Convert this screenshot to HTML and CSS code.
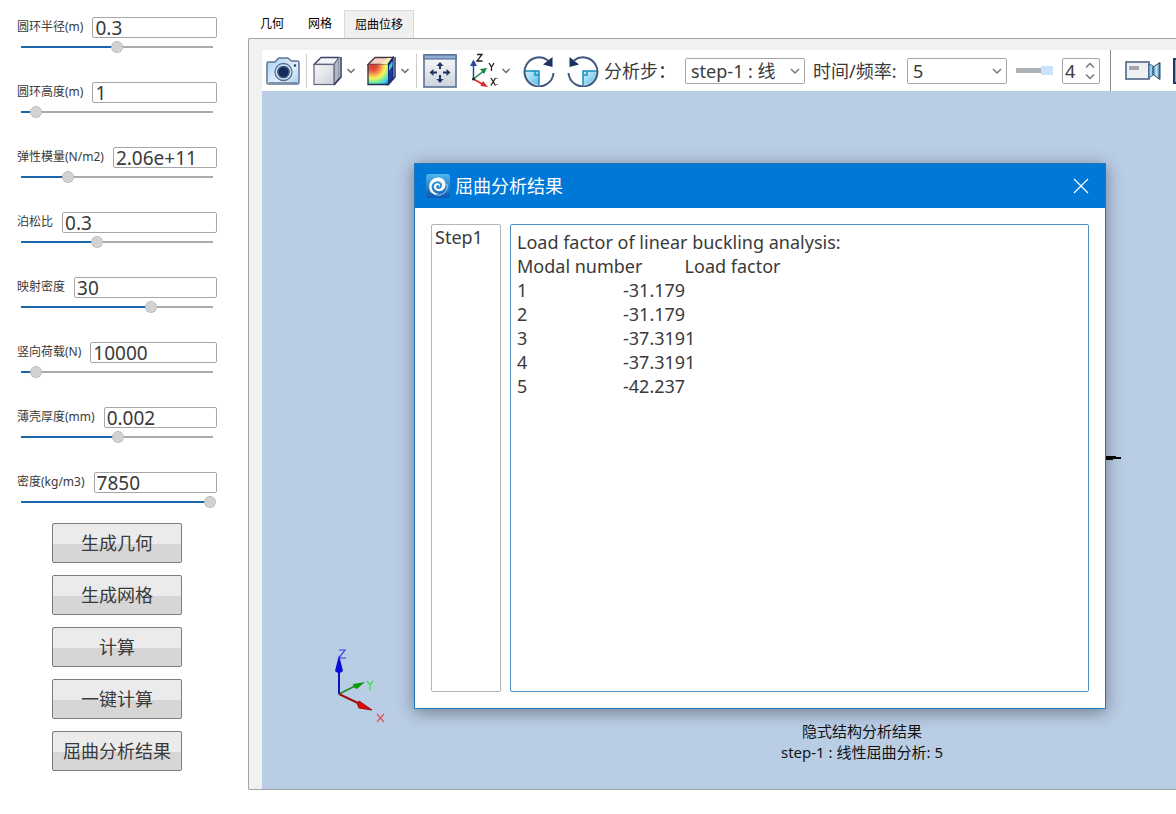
FILE: index.html
```html
<!DOCTYPE html>
<html lang="zh-CN">
<head>
<meta charset="utf-8">
<title>屈曲分析</title>
<link rel="stylesheet" href="styles.css">
</head>
<body>
<div class="app">
  <aside class="sidebar">
    <div class="fields">
      <div class="field">
        <div class="field-row"><label for="radius">圆环半径(m)</label><input class="field-value" id="radius" type="text" value="0.3"></div>
        <input class="slider" type="range" aria-label="圆环半径" min="0" max="1000" value="500" style="--fill:50%">
      </div>
      <div class="field">
        <div class="field-row"><label for="height">圆环高度(m)</label><input class="field-value" id="height" type="text" value="1"></div>
        <input class="slider" type="range" aria-label="圆环高度" min="0" max="1000" value="65" style="--fill:6.5%">
      </div>
      <div class="field">
        <div class="field-row"><label for="modulus">弹性模量(N/m2)</label><input class="field-value" id="modulus" type="text" value="2.06e+11"></div>
        <input class="slider" type="range" aria-label="弹性模量" min="0" max="1000" value="237" style="--fill:23.7%">
      </div>
      <div class="field">
        <div class="field-row"><label for="poisson">泊松比</label><input class="field-value" id="poisson" type="text" value="0.3"></div>
        <input class="slider" type="range" aria-label="泊松比" min="0" max="1000" value="392" style="--fill:39.2%">
      </div>
      <div class="field">
        <div class="field-row"><label for="mesh">映射密度</label><input class="field-value" id="mesh" type="text" value="30"></div>
        <input class="slider" type="range" aria-label="映射密度" min="0" max="1000" value="683" style="--fill:68.3%">
      </div>
      <div class="field">
        <div class="field-row"><label for="load">竖向荷载(N)</label><input class="field-value" id="load" type="text" value="10000"></div>
        <input class="slider" type="range" aria-label="竖向荷载" min="0" max="1000" value="65" style="--fill:6.5%">
      </div>
      <div class="field">
        <div class="field-row"><label for="thickness">薄壳厚度(mm)</label><input class="field-value" id="thickness" type="text" value="0.002"></div>
        <input class="slider" type="range" aria-label="薄壳厚度" min="0" max="1000" value="505" style="--fill:50.5%">
      </div>
      <div class="field">
        <div class="field-row"><label for="density">密度(kg/m3)</label><input class="field-value" id="density" type="text" value="7850"></div>
        <input class="slider" type="range" aria-label="密度" min="0" max="1000" value="1000" style="--fill:100%">
      </div>
    </div>
    <div class="actions">
      <button class="action" type="button">生成几何</button>
      <button class="action" type="button">生成网格</button>
      <button class="action" type="button">计算</button>
      <button class="action" type="button">一键计算</button>
      <button class="action" type="button">屈曲分析结果</button>
    </div>
  </aside>

  <main class="workspace">
    <nav class="tabs" role="tablist">
      <button class="tab" type="button" role="tab">几何</button>
      <button class="tab" type="button" role="tab">网格</button>
      <button class="tab tab-active" type="button" role="tab" aria-selected="true">屈曲位移</button>
    </nav>
    <section class="panel">
      <div class="toolbar">
        <button class="tool" type="button" aria-label="截图">
          <svg width="34" height="28" viewBox="0 0 34 28">
            <defs><linearGradient id="cam" x1="0" y1="0" x2="1" y2="1"><stop offset="0" stop-color="#a9cdf0"/><stop offset=".6" stop-color="#e4f0fb"/><stop offset="1" stop-color="#a8cbee"/></linearGradient></defs>
            <path d="M2.500 5H9L12 1.500Q12.500 1 13.500 1H21Q22 1 22.500 1.500L25.500 4H31.500Q33 4 33 5.500V25.500Q33 27 31.500 27H2.500Q1 27 1 25.500V6.500Q1 5 2.500 5Z" fill="url(#cam)" stroke="#5b7595" stroke-width="1.500"/>
            <path d="M3 25.500H31" stroke="#8193a9"/>
            <circle cx="17.500" cy="15" r="8.500" fill="#d7e7f7" stroke="#566f92" stroke-width="1.300"/>
            <circle cx="17.500" cy="15" r="5.600" fill="#152b5c" stroke="#35507d" stroke-width="1.500"/>
            <circle cx="29" cy="8.500" r="1.300" fill="#263f66"/>
          </svg>
        </button>
        <span class="divider"></span>
        <button class="tool" type="button" aria-label="显示模式">
          <svg width="30" height="30" viewBox="0 0 30 30">
            <defs><linearGradient id="cubeFace" x1="0" y1="0" x2="1" y2="1"><stop offset="0" stop-color="#f8f8fa"/><stop offset="1" stop-color="#cfd1d8"/></linearGradient></defs>
            <path d="M1 8.500L8 1.500H26L21 8.500Z" fill="#f4f5f8" stroke="#3a4562" stroke-width="1.300"/>
            <path d="M21 8.500L26 1.500V22L21 28.500Z" fill="#b4b8c4" stroke="#6a7288" stroke-width="1"/>
            <rect x="1" y="8.500" width="20" height="20" fill="url(#cubeFace)" stroke="#5e677e" stroke-width="1.200"/>
            <path d="M28 1V21L21 29" fill="none" stroke="#26365c" stroke-width="1.500"/>
          </svg>
          <svg class="chevron" width="10" height="8" viewBox="0 0 10 8"><path d="M1.500 2L5 5.500L8.500 2" fill="none" stroke="#607080" stroke-width="1.500"/></svg>
        </button>
        <button class="tool tool-contour" type="button" aria-label="云图">
          <svg width="30" height="30" viewBox="0 0 30 30">
            <defs><radialGradient id="contour" gradientUnits="userSpaceOnUse" cx="6" cy="10" r="24"><stop offset="0" stop-color="#cf3b35"/><stop offset=".2" stop-color="#e8563b"/><stop offset=".36" stop-color="#f5a94c"/><stop offset=".52" stop-color="#f8f45a"/><stop offset=".68" stop-color="#79ee9c"/><stop offset=".82" stop-color="#41cff0"/><stop offset="1" stop-color="#1852e0"/></radialGradient></defs>
            <path d="M1 8.500L8 1.500H26L21 8.500Z" fill="#f5d3c8" stroke="#4b3440" stroke-width="1.300"/>
            <path d="M14 8L20 2H26L21 8.500Z" fill="#f8edb0"/>
            <path d="M21 8.500L26 1.500V22L21 28.500Z" fill="#1736b4" stroke="#15245f" stroke-width="1.300"/>
            <path d="M22 10L25.500 5V10L22 15Z" fill="#43ccd8"/>
            <rect x="1" y="8.500" width="20" height="20" fill="url(#contour)"/>
            <path d="M1 8.500V28.500H21" fill="none" stroke="#252d4d" stroke-width="1.300"/>
            <path d="M28 1V21L21 29" fill="none" stroke="#26365c" stroke-width="1.500"/>
          </svg>
          <svg class="chevron" width="10" height="8" viewBox="0 0 10 8"><path d="M1.500 2L5 5.500L8.500 2" fill="none" stroke="#607080" stroke-width="1.500"/></svg>
        </button>
        <span class="divider"></span>
        <button class="tool" type="button" aria-label="适应窗口">
          <svg width="34" height="34" viewBox="0 0 34 34">
            <defs><linearGradient id="win" x1="0" y1="0" x2="0" y2="1"><stop offset="0" stop-color="#fafafb"/><stop offset="1" stop-color="#cdd3dd"/></linearGradient></defs>
            <rect x="1" y="1" width="32" height="32" fill="url(#win)" stroke="#5a7294" stroke-width="1.600"/>
            <rect x="1" y="1" width="32" height="4" fill="#8caed2" stroke="#4c678d"/>
            <path d="M17 10V15M17 21V26M9 18.500H14M20 18.500H25" stroke="#1f355f" stroke-width="2"/>
            <path d="M13.500 12L17 8L20.500 12ZM13.500 25L17 29L20.500 25ZM10.500 15L6.500 18.500L10.500 22ZM23.500 15L27.500 18.500L23.500 22Z" fill="#1f355f"/>
          </svg>
        </button>
        <button class="tool tool-axes" type="button" aria-label="视图方向">
          <svg width="28" height="36" viewBox="0 0 28 36">
            <path d="M3.500 26V11" stroke="#27479b" stroke-width="1.500"/><path d="M0 13L3.500 6.500L7 13Z" fill="#27479b"/>
            <path d="M3.500 26L13 18.500" stroke="#168442" stroke-width="1.500"/><path d="M10 16L17 15L14 21Z" fill="#168442"/>
            <path d="M3.500 26L13 31.500" stroke="#dd2929" stroke-width="1.500"/><path d="M13 28L18 34L10.500 33Z" fill="#dd2929"/>
            <circle cx="3.500" cy="26" r="1.500" fill="#222"/>
            <path d="M7 1.500H12L7 8H12.500M19 10L21.500 14L24 10M21.500 14V18M21 25L25.500 32.500M25.500 25L21 32.500" fill="none" stroke="#222" stroke-width="1.300"/>
            <path d="M27 25V26M27 31V32" stroke="#222"/>
          </svg>
          <svg class="chevron" width="10" height="8" viewBox="0 0 10 8"><path d="M1.500 2L5 5.500L8.500 2" fill="none" stroke="#607080" stroke-width="1.500"/></svg>
        </button>
        <button class="tool tool-rotate" type="button" aria-label="顺时针旋转">
          <svg width="32" height="32" viewBox="0 0 32 32">
            <defs><linearGradient id="quad" x1="0" y1="0" x2="1" y2="1"><stop offset="0" stop-color="#d3f1fd"/><stop offset="1" stop-color="#5dbbe4"/></linearGradient></defs>
            <path d="M2 16H16V30Q4 29 2 16Z" fill="url(#quad)"/>
            <path d="M1 16H16V30.500M12 16V20H16" fill="none" stroke="#168fc2" stroke-width="1.500"/>
            <path d="M25 5.500A14.500 14.500 0 1 0 30.500 18" fill="none" stroke="#40577f" stroke-width="2"/>
            <path d="M29.500 2V12L20 9.500Z" fill="#1c315d"/>
          </svg>
        </button>
        <button class="tool tool-rotate" type="button" aria-label="逆时针旋转">
          <svg width="32" height="32" viewBox="0 0 32 32">
            <path d="M30 16H16V30Q28 29 30 16Z" fill="url(#quad)"/>
            <path d="M31 16H16V30.500M20 16V20H16" fill="none" stroke="#168fc2" stroke-width="1.500"/>
            <path d="M7 5.500A14.500 14.500 0 1 1 1.500 18" fill="none" stroke="#40577f" stroke-width="2"/>
            <path d="M2.500 2V12L12 9.500Z" fill="#1c315d"/>
          </svg>
        </button>
        <label class="tool-label label-step" for="step">分析步：</label>
        <select class="combo combo-step" id="step"><option>step-1 : 线性屈曲分析</option></select>
        <label class="tool-label label-time" for="time">时间/频率:</label>
        <select class="combo combo-time" id="time"><option>5</option></select>
        <input class="frame-slider" type="range" aria-label="帧" min="0" max="4" value="4">
        <div class="spin">
          <input class="spin-value" type="text" inputmode="numeric" aria-label="帧序号" value="4">
          <div class="spin-buttons">
            <button class="spin-button" type="button" aria-label="增加"><svg width="10" height="7" viewBox="0 0 10 7"><path d="M1 5.500L5 1.500L9 5.500" fill="none" stroke="#6b7b88" stroke-width="1.500"/></svg></button>
            <button class="spin-button" type="button" aria-label="减少"><svg width="10" height="7" viewBox="0 0 10 7"><path d="M1 1.500L5 5.500L9 1.500" fill="none" stroke="#6b7b88" stroke-width="1.500"/></svg></button>
          </div>
        </div>
        <span class="divider divider-full"></span>
        <button class="tool" type="button" aria-label="录制动画">
          <svg width="36" height="20" viewBox="0 0 36 20">
            <defs><linearGradient id="lens" x1="0" y1="0" x2="1" y2="0"><stop offset="0" stop-color="#3b87b4"/><stop offset=".5" stop-color="#c7ebf9"/><stop offset="1" stop-color="#2d668f"/></linearGradient></defs>
            <rect x="1" y="1" width="23" height="17" fill="#eeeff3" stroke="#4f6788" stroke-width="1.600"/>
            <rect x="4" y="5" width="10" height="4" fill="#a5a6ac"/>
            <path d="M24 3L28 5V14L24 17Z" fill="#9ed1eb" stroke="#365d80"/>
            <path d="M28 6L35 1.500V18.500L28 13.500Z" fill="url(#lens)" stroke="#244c70"/>
          </svg>
        </button>
        <button class="tool tool-film" type="button" aria-label="动画">
          <svg width="34" height="26" viewBox="0 0 34 26"><rect x="1" y="1" width="32" height="24" fill="#8fa6c4" stroke="#23385e" stroke-width="2"/></svg>
        </button>
      </div>

      <div class="viewport">
        <svg class="triad" width="60" height="80" viewBox="0 0 60 80" aria-label="坐标轴">
          <path d="M9 49V20" stroke="#1111b8" stroke-width="2"/><path d="M5 26L9 10L13 26Q9 30 5 26Z" fill="#0c0cd8"/>
          <path d="M9 49L25 41" stroke="#168c16" stroke-width="1.500"/><path d="M23 39L35 37L27 44Q23 43 23 39Z" fill="#0c9b0c"/>
          <path d="M9 49L30 59" stroke="#9b1010" stroke-width="2"/><path d="M29 56L42 65L29 63Q26 59 29 56Z" fill="#dc0a0a" stroke="#a20b0b"/>
          <path d="M9 5H15L9 13H16" fill="none" stroke="#3838df" stroke-width="1.200"/>
          <path d="M37 36L40 40L43 36M40 40V45" fill="none" stroke="#3ddd4c" stroke-width="1.300"/>
          <path d="M47 69L54 77M54 69L47 77" stroke="#e55360" stroke-width="1.300"/>
        </svg>
        <svg class="model-edge" width="20" height="6" viewBox="0 0 20 6"><path d="M0 1H12V2H17V4H9V5H0Z" fill="#050505"/></svg>
        <div class="caption">
          <div>隐式结构分析结果</div>
          <div>step-1 : 线性屈曲分析: 5</div>
        </div>

        <div class="dialog" role="dialog" aria-labelledby="dialog-title">
          <header class="dialog-header">
            <svg width="24" height="24" viewBox="0 0 24 24">
              <defs><linearGradient id="logo" x1="0" y1="0" x2="0" y2="1"><stop offset="0" stop-color="#4fb7ef"/><stop offset="1" stop-color="#0b59b0"/></linearGradient></defs>
              <rect width="24" height="24" rx="3" fill="url(#logo)"/>
              <path d="M21 10A9 9 0 0 1 8 20" fill="none" stroke="#a9d4f5" stroke-width="1"/>
              <path d="M3.500 15C2 8 7 3 13 3.500C19 4 21.500 11 18 15C15 18.500 9 17.500 8 14C7.200 11 10 8.500 12.500 9.500C15 10.500 14.500 13.500 12 13.500C14 12.500 13.500 11 12 11C10.500 11 9.500 12.500 10.500 14C12 16 15.500 15 16 12C16.500 9 13.500 6.500 10 7.500C6 8.500 5 12 6 15C7 18 10 20 13 19.500C9 21.500 4.500 19.500 3.500 15Z" fill="#fff"/>
            </svg>
            <h2 class="dialog-title" id="dialog-title">屈曲分析结果</h2>
            <button class="dialog-close" type="button" aria-label="关闭"><svg width="16" height="16" viewBox="0 0 16 16"><path d="M1 1L15 15M15 1L1 15" stroke="#fff" stroke-width="1.200"/></svg></button>
          </header>
          <div class="dialog-body">
            <ul class="step-list"><li>Step1</li></ul>
            <textarea class="result" readonly aria-label="分析结果">Load factor of linear buckling analysis:
Modal number         Load factor
1&#9;&#9;-31.179
2&#9;&#9;-31.179
3&#9;&#9;-37.3191
4&#9;&#9;-37.3191
5&#9;&#9;-42.237</textarea>
          </div>
        </div>
      </div>
    </section>
  </main>
</div>
</body>
</html>
```

FILE: styles.css
```css
* { box-sizing: border-box; }

body {
  margin: 0;
  background: #fff;
  color: #3a3a3a;
  font: 18px/24px "Noto Sans", "Noto Sans CJK SC", sans-serif;
}

button, input, select, textarea {
  margin: 0;
  color: inherit;
  font: inherit;
}

.app {
  display: flex;
  min-height: 100vh;
  overflow: hidden;
}

/* Parameters */
.sidebar {
  flex: 0 0 248px;
  min-width: 0;
  padding: 17px 31px 24px 17px;
}

.fields {
  display: flex;
  flex-direction: column;
  gap: 29px;
}

.field {
  display: flex;
  flex-direction: column;
  gap: 4px;
}

.field-row {
  display: flex;
  align-items: center;
  gap: 9px;
  height: 20px;
}

.field-row label {
  flex: none;
  font-size: 12px;
  line-height: 20px;
}

.field-value {
  flex: 1;
  width: 0;
  min-width: 0;
  height: 21px;
  padding: 1px 2px 0;
  border: 1px solid #a6a6a6;
  border-radius: 2px;
  background: #fff;
  font-size: 19px;
  line-height: 18px;
}

.slider {
  appearance: none;
  height: 12px;
  margin: 0 1px;
  background: linear-gradient(to right, #1b66ab var(--fill), #aaa var(--fill)) 3px center / calc(100% - 6px) 2px no-repeat;
}

.slider::-webkit-slider-thumb {
  appearance: none;
  width: 12px;
  height: 12px;
  border: 1px dotted #aaa;
  border-radius: 50%;
  background: #d2d2d2;
}

.actions {
  display: flex;
  flex-direction: column;
  gap: 12px;
  margin: 15px 35px 0;
}

.action {
  height: 40px;
  padding: 0;
  border: 1px solid #7d7d7d;
  border-radius: 2px;
  background: linear-gradient(#ebebeb 52%, #d6d6d6 52%);
  white-space: nowrap;
}

/* Workspace */
.workspace {
  display: flex;
  flex: 1;
  flex-direction: column;
  min-width: 0;
  padding-bottom: 24px;
}

.tabs {
  display: flex;
  padding-top: 10px;
}

.tab {
  height: 28px;
  padding: 0 12px;
  border: 0;
  background: none;
  color: #000;
  font-size: 12px;
  line-height: 28px;
}

.tab-active {
  padding: 0 10px;
  border: 1px solid #d9d9d9;
  border-bottom: 0;
  background: #f0f0f0;
}

.panel {
  display: flex;
  flex: 1;
  flex-direction: column;
  padding: 11px 0 0 13px;
  border: solid #a3a3a3;
  border-width: 1px 0 1px 1px;
  border-radius: 2px 0 0 2px;
  background: #f1f1f1;
}

.toolbar {
  display: flex;
  align-items: center;
  height: 41px;
  padding-left: 4px;
  overflow: hidden;
  background: #fff;
}

.toolbar > * { flex: none; }

.tool {
  display: flex;
  align-items: center;
  gap: 3px;
  padding: 0;
  border: 0;
  background: none;
}

.tool svg { display: block; }
.tool-contour { margin-left: 11px; }
.tool-axes { margin-left: 13px; }
.tool-rotate { margin-left: 12px; }
.tool-film { margin-left: 12px; }

.divider {
  width: 1px;
  height: 34px;
  margin: 0 6px;
  background: #cecece;
}

.divider-full {
  height: 41px;
  margin: 0 14px 0 10px;
  background: #8b8b8b;
}

.tool-label { white-space: nowrap; }
.label-step { width: 81px; margin-left: 5px; }
.label-time { width: 86px; margin-left: 8px; }

.combo {
  appearance: none;
  height: 26px;
  border: 1px solid #a6a6a6;
  border-radius: 2px;
  background: #fff url("data:image/svg+xml,%3Csvg xmlns='http://www.w3.org/2000/svg' width='10' height='8'%3E%3Cpath d='M1 2L5 6L9 2' fill='none' stroke='%236b7b88' stroke-width='1.5'/%3E%3C/svg%3E") right 4px center no-repeat;
}

.combo-step { width: 120px; padding: 0 28px 0 5px; }
.combo-time { width: 100px; margin-left: 8px; padding: 0 20px 0 5px; }

.frame-slider {
  appearance: none;
  width: 37px;
  height: 9px;
  margin-left: 9px;
  background: linear-gradient(#aab0b5, #aab0b5) center / 100% 5px no-repeat;
}

.frame-slider::-webkit-slider-thumb {
  appearance: none;
  width: 12px;
  height: 9px;
  background: #cce1fc;
}

.spin {
  display: flex;
  width: 38px;
  height: 26px;
  margin-left: 9px;
  border: 1px solid #a6a6a6;
  border-radius: 2px;
}

.spin-value {
  flex: 1;
  width: 0;
  min-width: 0;
  padding: 0 0 0 2px;
  border: 0;
  background: none;
}

.spin-buttons {
  display: flex;
  flex-direction: column;
  justify-content: center;
  gap: 4px;
  padding-right: 4px;
}

.spin-button {
  display: flex;
  padding: 0;
  border: 0;
  background: none;
}

/* 3D view */
.viewport {
  position: relative;
  flex: 1;
  min-height: 640px;
  overflow: hidden;
  background: #b9cde5;
}

.triad {
  position: absolute;
  left: 68px;
  top: 554px;
}

.model-edge {
  position: absolute;
  left: 842px;
  top: 364px;
}

.caption {
  position: absolute;
  left: 500px;
  top: 630px;
  width: 200px;
  color: #111;
  font-size: 15px;
  line-height: 21px;
  text-align: center;
  white-space: nowrap;
}

.dialog {
  position: absolute;
  left: 152px;
  top: 72px;
  display: flex;
  flex-direction: column;
  width: 692px;
  height: 546px;
  border: 1px solid #2378bd;
  background: #fff;
  box-shadow: 0 3px 16px rgba(0, 0, 0, .4);
}

.dialog-header {
  display: flex;
  align-items: center;
  gap: 5px;
  height: 44px;
  padding: 0 16px 0 11px;
  background: #0078d7;
  color: #fff;
}

.dialog-title {
  flex: 1;
  margin: 0;
  font-size: 18px;
  font-weight: 400;
}

.dialog-close {
  display: flex;
  padding: 0;
  border: 0;
  background: none;
}

.dialog-body {
  display: flex;
  flex: 1;
  gap: 9px;
  padding: 16px;
}

.step-list {
  flex: 0 0 70px;
  margin: 0;
  padding: 0 3px;
  border: 1px solid #b5b5b5;
  border-radius: 2px;
  list-style: none;
}

.result {
  flex: 1;
  padding: 5px 6px;
  border: 1px solid #4f8fc4;
  border-radius: 2px;
  outline: 0;
  resize: none;
  tab-size: 53px;
}
```
